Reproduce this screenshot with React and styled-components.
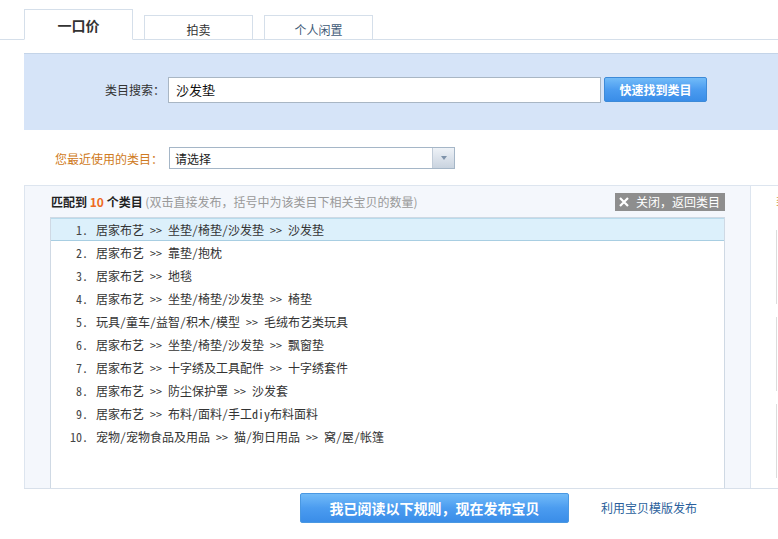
import React from "react";
import styled, { createGlobalStyle } from "styled-components";

const Global = createGlobalStyle`
  html, body { margin: 0; padding: 0; background: #fff; overflow: hidden; }
  body {
    font-family: "Noto Sans CJK SC", "Liberation Sans", sans-serif;
    font-size: 12px;
    color: #333;
  }
  * { box-sizing: border-box; }
`;

const Page = styled.div`
  width: 778px;
  height: 539px;
  overflow: hidden;
  padding-top: 9px;
`;

const TabBar = styled.div`
  display: flex;
  align-items: flex-end;
  gap: 11px;
  padding-left: 24px;
  height: 31px;
  border-bottom: 1px solid #d5dfea;
`;

const Tab = styled.div`
  width: 109px;
  height: ${(p) => (p.$active ? 31 : 24)}px;
  margin-bottom: ${(p) => (p.$active ? -1 : 0)}px;
  border: 1px solid #d5dfea;
  border-bottom: ${(p) => (p.$active ? "1px solid #fff" : "none")};
  background: #fff;
  display: flex;
  align-items: center;
  justify-content: center;
  font-size: ${(p) => (p.$active ? 14 : 12)}px;
  font-weight: ${(p) => (p.$active ? 700 : 400)};
  color: ${(p) => p.$color || "#333"};
  padding-top: ${(p) => (p.$active ? 0 : 3)}px;
`;

const Content = styled.div`
  margin-left: 24px;
  width: 800px;
  padding-top: 13px;
`;

const SearchPanel = styled.div`
  height: 77px;
  background: #d6e4f8;
  border-top: 1px solid #c4d4e8;
  display: flex;
  align-items: center;
  padding-bottom: 5px;
`;

const Label = styled.label`
  width: ${(p) => p.$w}px;
  text-align: right;
  flex-shrink: 0;
  font-size: 12px;
  color: ${(p) => p.$color || "#333"};
  padding-right: ${(p) => p.$pr || 0}px;
`;

const TextInput = styled.div`
  width: 433px;
  height: 26px;
  background: #fff;
  border: 1px solid #a9b6c4;
  display: flex;
  align-items: center;
  padding-left: 7px;
  font-size: 13px;
  color: #111;
`;

const BlueButton = styled.button`
  font-family: inherit;
  border: 1px solid ${(p) => (p.$big ? "#4a98e2" : "#3d8ad8")};
  border-radius: 2px;
  background: linear-gradient(#72bbf8, #4b9cf0 50%, #3a8de8);
  color: #fff;
  font-weight: 700;
  font-size: ${(p) => (p.$big ? 14 : 12)}px;
  width: ${(p) => p.$w}px;
  height: ${(p) => p.$h}px;
  margin-left: ${(p) => p.$ml || 0}px;
  padding: 0;
  display: flex;
  align-items: center;
  justify-content: center;
  cursor: pointer;
`;

const RecentRow = styled.div`
  display: flex;
  align-items: center;
  margin-top: 17px;
  height: 22px;
`;

const Select = styled.div`
  width: 286px;
  height: 22px;
  border: 1px solid #a5b6c7;
  background: #fff;
  display: flex;
  align-items: stretch;
`;

const SelectText = styled.div`
  flex: 1;
  display: flex;
  align-items: center;
  padding-left: 5px;
  font-size: 12px;
  color: #222;
`;

const SelectArrow = styled.div`
  width: 22px;
  background: linear-gradient(#eef2f7, #c9d3df);
  border-left: 1px solid #c1ccd8;
  display: flex;
  align-items: center;
  justify-content: center;
  &::after {
    content: "";
    border-left: 3px solid transparent;
    border-right: 3px solid transparent;
    border-top: 4px solid #7f93aa;
  }
`;

const Results = styled.div`
  margin-top: 16px;
  height: 304px;
  display: flex;
  border-top: 1px solid #dde5ef;
  border-bottom: 1px solid #d8e0ea;
`;

const LeftCol = styled.div`
  width: 727px;
  flex-shrink: 0;
  background: #f4f7fc;
  border-left: 1px solid #dde5ef;
  border-right: 1px solid #dde5ef;
  padding: 0 25px 0 25px;
  display: flex;
  flex-direction: column;
`;

const Heading = styled.div`
  height: 31px;
  display: flex;
  align-items: center;
  justify-content: space-between;
  padding-bottom: 1px;
`;

const HeadingText = styled.div`
  font-size: 12px;
  color: #222;
  padding-left: 1px;
`;

const Strong = styled.b`
  font-weight: 700;
  color: ${(p) => p.$color || "#222"};
`;

const Hint = styled.span`
  color: #999;
`;

const CloseButton = styled.div`
  width: 110px;
  height: 18px;
  background: #8e8e8e;
  color: #fff;
  display: flex;
  align-items: center;
  padding-left: 4px;
  gap: 7px;
  font-size: 12px;
  margin-top: 1px;
`;

const ListBox = styled.div`
  flex: 1;
  background: #fff;
  border: 1px solid #cfd9e4;
  border-bottom: none;
`;

const Row = styled.div`
  height: 23px;
  display: flex;
  align-items: center;
  background: ${(p) => (p.$active ? "#dcf0fb" : "transparent")};
  border-top: 1px solid ${(p) => (p.$active ? "#b9dbec" : "transparent")};
  border-bottom: 1px solid ${(p) => (p.$active ? "#a8cee2" : "transparent")};
  font-size: 12px;
  color: #333;
  font-feature-settings: "hwid" 1;
`;

const Num = styled.span`
  width: 37px;
  text-align: right;
  flex-shrink: 0;
  color: #444;
`;

const RowText = styled.span`
  margin-left: 8px;
  white-space: nowrap;
`;

const RightCol = styled.div`
  flex: 1;
  background: #fff;
  padding: 5px 0 0 25px;
  display: flex;
  flex-direction: column;
  gap: 13px;
`;

const RightTitle = styled.div`
  color: #c8a050;
  font-size: 12px;
  height: 18px;
  margin-bottom: 8px;
`;

const RightBox = styled.div`
  height: 74px;
  border-left: 1px solid #dcdcdc;
`;

const Footer = styled.div`
  display: flex;
  align-items: center;
  padding-left: 276px;
  padding-top: 4px;
`;

const Link = styled.a`
  margin-left: 32px;
  color: #2b5f9c;
  font-size: 12px;
  text-decoration: none;
  margin-top: -2px;
`;

const CloseIcon = () => (
  <svg width="10" height="10" viewBox="0 0 10 10">
    <path d="M1 1 L9 9 M9 1 L1 9" stroke="#fff" strokeWidth="2.2" />
  </svg>
);

const items = [
  "居家布艺 >> 坐垫/椅垫/沙发垫 >> 沙发垫",
  "居家布艺 >> 靠垫/抱枕",
  "居家布艺 >> 地毯",
  "居家布艺 >> 坐垫/椅垫/沙发垫 >> 椅垫",
  "玩具/童车/益智/积木/模型 >> 毛绒布艺类玩具",
  "居家布艺 >> 坐垫/椅垫/沙发垫 >> 飘窗垫",
  "居家布艺 >> 十字绣及工具配件 >> 十字绣套件",
  "居家布艺 >> 防尘保护罩 >> 沙发套",
  "居家布艺 >> 布料/面料/手工diy布料面料",
  "宠物/宠物食品及用品 >> 猫/狗日用品 >> 窝/屋/帐篷",
];

export default function App() {
  return (
    <Page>
      <Global />
      <TabBar>
        <Tab $active>一口价</Tab>
        <Tab>拍卖</Tab>
        <Tab $color="#3f5b78">个人闲置</Tab>
      </TabBar>
      <Content>
        <SearchPanel>
          <Label $w={144} $pr={3}>类目搜索：</Label>
          <TextInput>沙发垫</TextInput>
          <BlueButton $w={103} $h={25} $ml={3}>快速找到类目</BlueButton>
        </SearchPanel>
        <RecentRow>
          <Label $w={145} $pr={6} $color="#cf7a22">您最近使用的类目：</Label>
          <Select>
            <SelectText>请选择</SelectText>
            <SelectArrow />
          </Select>
        </RecentRow>
        <Results>
          <LeftCol>
            <Heading>
              <HeadingText>
                <Strong>匹配到 </Strong>
                <Strong $color="#ee6a23">10</Strong>
                <Strong> 个类目</Strong>
                <Hint> (双击直接发布，括号中为该类目下相关宝贝的数量)</Hint>
              </HeadingText>
              <CloseButton>
                <CloseIcon />
                关闭，返回类目
              </CloseButton>
            </Heading>
            <ListBox>
              {items.map((t, i) => (
                <Row key={i} $active={i === 0}>
                  <Num>{i + 1}.</Num>
                  <RowText>{t}</RowText>
                </Row>
              ))}
            </ListBox>
          </LeftCol>
          <RightCol>
            <RightTitle>类</RightTitle>
            <RightBox />
            <RightBox />
            <RightBox />
          </RightCol>
        </Results>
        <Footer>
          <BlueButton $big $w={269} $h={30}>我已阅读以下规则，现在发布宝贝</BlueButton>
          <Link href="#">利用宝贝模版发布</Link>
        </Footer>
      </Content>
    </Page>
  );
}
